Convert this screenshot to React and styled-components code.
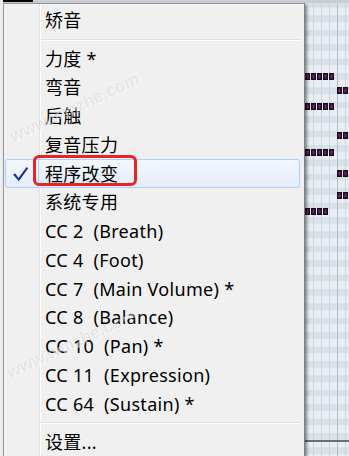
import styled, { createGlobalStyle } from 'styled-components';

const GlobalStyle = createGlobalStyle`
  html, body {
    margin: 0;
    padding: 0;
    background: #e8eef4;
  }
`;

const items = [
  { label: '矫音' },
  { sep: true },
  { label: '力度 *' },
  { label: '弯音' },
  { label: '后触' },
  { label: '复音压力' },
  { label: '程序改变', checked: true },
  { label: '系统专用' },
  { label: 'CC 2  (Breath)' },
  { label: 'CC 4  (Foot)' },
  { label: 'CC 7  (Main Volume) *' },
  { label: 'CC 8  (Balance)' },
  { label: 'CC 10  (Pan) *' },
  { label: 'CC 11  (Expression)' },
  { label: 'CC 64  (Sustain) *' },
  { sep: true },
  { label: '设置...' },
];

// note groups on the piano roll: [x, y, count]
const notes = [
  [305, 73, 5],
  [337, 87, 2],
  [305, 103, 5],
  [337, 132, 2],
  [305, 149, 5],
  [337, 170, 2],
  [337, 192, 2],
  [305, 208, 4],
];

function PianoRoll() {
  const bands = [];
  for (let y = 1; y < 456; y += 14.4) bands.push(y);
  const lines = [313, 321, 329, 337, 345];

  return (
    <Roll width="349" height="456" viewBox="0 0 349 456">
      <rect x="0" y="0" width="349" height="456" fill="#e9eef4" />
      {bands.map((y) => (
        <rect key={y} x="0" y={y} width="349" height="6.5" fill="#d8e0e9" />
      ))}
      {lines.map((x) => (
        <rect key={x} x={x} y="0" width="1" height="456" fill={x === 337 ? '#b9bec4' : '#cfd4da'} />
      ))}
      <rect x="0" y="0" width="349" height="3" fill="#c9ced4" />
      <rect x="0" y="0" width="33" height="2" fill="#000" />
      <rect x="0" y="0" width="3" height="456" fill="#eeeeee" />
      <rect x="305" y="440" width="44" height="2" fill="#6f6f6f" />
      {notes.map(([x, y, n]) =>
        Array.from({ length: n }).map((_, i) => (
          <g key={`${x}-${y}-${i}`}>
            <rect x={x + i * 6} y={y} width="5" height="7" fill="#111" />
            <rect x={x + i * 6 + 1.5} y={y + 1.5} width="2" height="4" fill="#8a1a8e" />
          </g>
        ))
      )}
    </Roll>
  );
}

function Check() {
  return (
    <svg width="17" height="16" viewBox="0 0 17 16">
      <path d="M1 8.6 L3.4 7.4 L6.4 12 L14.6 1 L16.2 2.2 L6.8 15.2 Z" fill="#1f2f9e" />
    </svg>
  );
}

export default function App() {
  return (
    <Page>
      <GlobalStyle />
      <PianoRoll />
      <Menu>
        {items.map((it, i) =>
          it.sep ? (
            <Separator key={i} />
          ) : (
            <Item key={i} $active={it.checked}>
              <Gutter $active={it.checked}>{it.checked && <Check />}</Gutter>
              <Label>{it.label}</Label>
            </Item>
          )
        )}
      </Menu>
      <Watermark $x={75} $y={108}>www.wmzhe.com</Watermark>
      <Watermark $x={72} $y={344}>www.wmzhe.com</Watermark>
      <Callout />
    </Page>
  );
}

const Page = styled.div`
  position: relative;
  width: 349px;
  height: 456px;
  overflow: hidden;
`;

const Roll = styled.svg`
  display: block;
`;

const Menu = styled.div`
  position: absolute;
  left: 3px;
  top: 3px;
  width: 302px;
  box-sizing: border-box;
  padding: 2px 2px 0 1px;
  background:
    linear-gradient(to right, transparent 35px, #e2e3e3 35px, #e2e3e3 36px, #ffffff 36px, #ffffff 37px, transparent 37px),
    #f0f0f0;
  border: 1px solid #979797;
  border-right-color: #808080;
  box-shadow: 2px 2px 3px rgba(0, 0, 0, 0.45);
  font-family: 'Noto Sans', 'Noto Sans CJK SC', sans-serif;
`;

const Item = styled.div`
  display: flex;
  align-items: center;
  height: 28.75px;
  box-sizing: border-box;
  margin-right: 2px;
  border: 1px solid ${(p) => (p.$active ? '#aecff7' : 'transparent')};
  border-radius: 3px;
  background: ${(p) => (p.$active ? 'linear-gradient(to bottom, #f3f7fd, #e4edfa)' : 'transparent')};
`;

const Gutter = styled.span`
  display: flex;
  align-items: center;
  justify-content: flex-start;
  width: 34px;
  height: 100%;
  box-sizing: border-box;
  padding-left: 7px;
  margin-left: -1px;
  border-right: 1px solid ${(p) => (p.$active ? '#aecff7' : 'transparent')};
`;

const Label = styled.span`
  margin-left: 6px;
  font-size: 18px;
  letter-spacing: 0.3px;
  color: #000;
  white-space: pre;
  line-height: 1;
`;

const Separator = styled.div`
  height: 9.5px;
  position: relative;
  &::after {
    content: '';
    position: absolute;
    left: 35px;
    right: 2px;
    top: 4px;
    height: 1px;
    background: #e0e0e0;
    border-bottom: 1px solid #ffffff;
  }
`;

const Watermark = styled.div`
  position: absolute;
  left: ${(p) => p.$x}px;
  top: ${(p) => p.$y}px;
  transform: translate(-50%, -50%) rotate(-25deg);
  font-family: 'Liberation Sans', Arial, sans-serif;
  font-weight: 700;
  font-size: 17px;
  color: rgba(0, 0, 0, 0.07);
  text-shadow: 1px 1px 0 rgba(255, 255, 255, 0.5);
  white-space: nowrap;
  pointer-events: none;
`;

const Callout = styled.div`
  position: absolute;
  left: 33px;
  top: 155px;
  width: 104px;
  height: 31px;
  box-sizing: border-box;
  border: 3px solid #e52622;
  border-radius: 6px;
`;
